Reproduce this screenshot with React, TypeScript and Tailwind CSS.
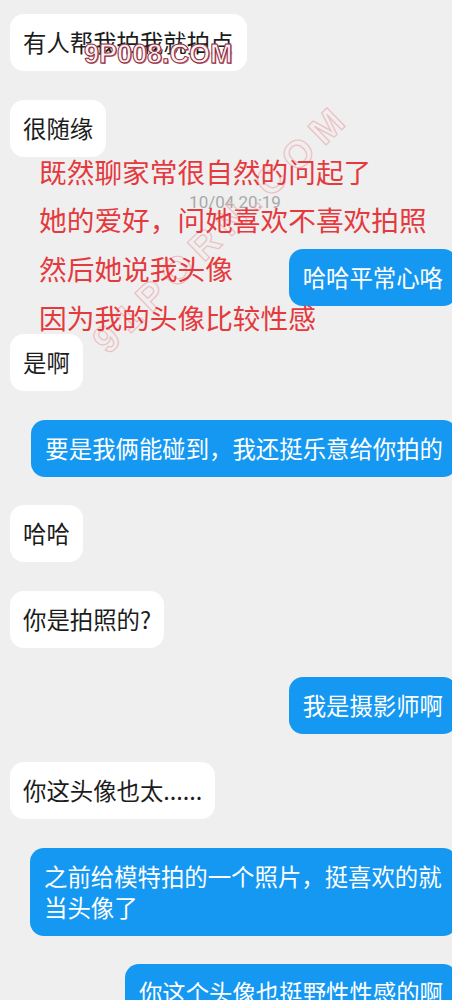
import React from "react";

function Left({ children }: { children: React.ReactNode }) {
  return (
    <div className="self-start ml-[10px] rounded-[14px] bg-white px-[13px] py-[13px] text-[23.4px] leading-[31px] text-[#1c1c1c]">
      {children}
    </div>
  );
}

function Right({ children }: { children: React.ReactNode }) {
  return (
    <div className="self-end mr-[-5px] max-w-[427px] rounded-[14px] bg-[#1598f1] px-[14px] py-[13px] text-[23.4px] leading-[31px] text-white">
      {children}
    </div>
  );
}

export default function App() {
  return (
    <div className="relative w-[452px] h-[1000px] overflow-hidden bg-[#efefef] font-['Noto_Sans_CJK_SC','Noto_Sans',sans-serif]">
      <div className="flex flex-col gap-[28.6px] pt-[14px]">
        <Left>有人帮我拍我就拍点</Left>
        <Left>很随缘</Left>
        <div className="flex h-[34.8px] items-center justify-center pl-[18px] font-['Roboto',sans-serif] text-[17px] text-[#a9a9a9]">
          10/04 20:19
        </div>
        <Right>哈哈平常心咯</Right>
        <Left>是啊</Left>
        <Right>要是我俩能碰到，我还挺乐意给你拍的</Right>
        <Left>哈哈</Left>
        <Left>你是拍照的?</Left>
        <Right>我是摄影师啊</Right>
        <Left>你这头像也太......</Left>
        <Right>之前给模特拍的一个照片，挺喜欢的就当头像了</Right>
        <Right>你这个头像也挺野性性感的啊</Right>
      </div>

      {/* diagonal watermark */}
      <div className="pointer-events-none absolute left-[222px] top-[228px] -translate-x-1/2 -translate-y-1/2 -rotate-[44deg] whitespace-nowrap font-['Liberation_Sans',sans-serif] text-[38px] font-bold tracking-[9px] text-transparent [-webkit-text-stroke:1.2px_#ecb4ba] opacity-80">
        91PORN.COM
      </div>

      {/* top watermark */}
      <div className="pointer-events-none absolute left-[84px] top-[39px] whitespace-nowrap font-['Liberation_Sans',sans-serif] text-[27px] font-bold leading-[30px] text-white/90 [-webkit-text-stroke:1px_#8c2a3a] [text-shadow:1px_1px_0_#d07080]">
        9P008.COM
      </div>

      {/* red annotation */}
      <div className="pointer-events-none absolute left-[39px] top-[146.6px] text-[27.7px] leading-[48.7px] text-[#e43a3e]">
        <div>既然聊家常很自然的问起了</div>
        <div>她的爱好，问她喜欢不喜欢拍照</div>
        <div>然后她说我头像</div>
        <div>因为我的头像比较性感</div>
      </div>
    </div>
  );
}
